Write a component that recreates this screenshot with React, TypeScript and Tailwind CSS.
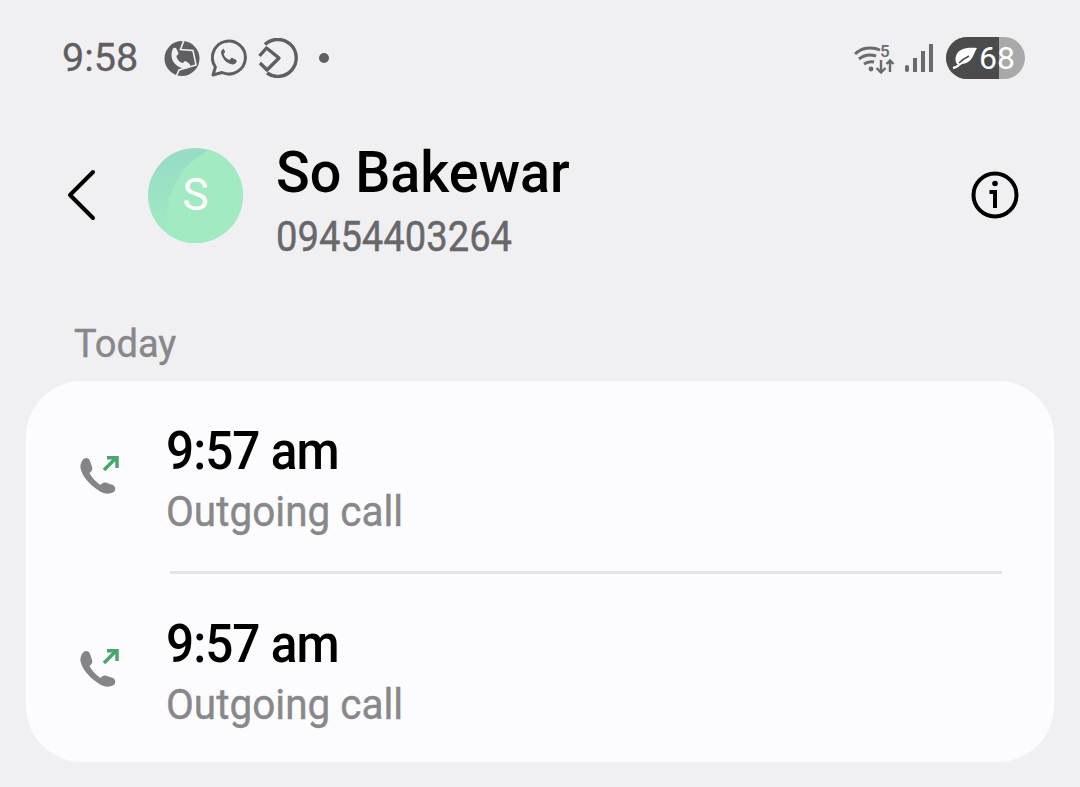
const font = { fontFamily: 'Roboto, sans-serif' };

function PhoneBubbleIcon() {
  return (
    <svg width="36" height="37" viewBox="0 0 36 37">
      <circle cx="18" cy="18.500" r="17.500" fill="#5f5f61" />
      <path d="M20 0L16.500 9.500L29 10.500L32 25L15 30L12 37" fill="none" stroke="#f0f0f2" strokeWidth="1.600" />
      <path d="M9.500 8c2-1 3 0 4 3l1 2c0 2-2 2-2 3 0 3 3 6 6 7 1 0 2-2 3-2l3 2c2 1 2 3 1 4-2 2-5 2-8 1-6-2-10-7-10-13 0-3 1-6 2-7z" fill="#f0f0f2" />
    </svg>
  );
}

function WhatsappIcon() {
  return (
    <svg width="36" height="38" viewBox="0 0 36 38" fill="none">
      <path d="M2 36l2.400-8A16.500 16.500 0 1 1 11 33.500z" stroke="#5f5f61" strokeWidth="3" strokeLinejoin="round" />
      <path d="M12.500 10c-3 1-3 4-1 8 2 4 5 6 8 7 3 1 5 0 6-2 .5-1.500 0-2-1-2.500l-3-1.500c-1-.5-1.500 0-2 1-.5.8-1 1-2 .5-2-1-3.500-2.500-4.500-4.500-.5-1 0-1.500.5-2 1-1 .5-1.500 0-2.500l-1-2c-.5-.8-.8-.7 0-.5z" fill="#5f5f61" />
    </svg>
  );
}

function ArrowCircleIcon() {
  return (
    <svg width="40" height="40" viewBox="0 0 40 40" fill="none" stroke="#5f5f61" strokeWidth="3.400">
      <path d="M7 6.500A18.500 18.500 0 1 1 9 35" />
      <path d="M1.500 18L8.500 10L21 20L9 32L2 25" strokeLinejoin="round" />
    </svg>
  );
}

function WifiIcon() {
  return (
    <svg width="42" height="32" viewBox="0 0 42 32" fill="none">
      <path d="M1 12C7 6 17 4 26 8" stroke="#6a6a6c" strokeWidth="3" />
      <path d="M5 17c5-4 11-5 17-3" stroke="#6a6a6c" strokeWidth="3" />
      <path d="M10 22c3-2 6-3 10-2" stroke="#6a6a6c" strokeWidth="3" />
      <circle cx="17" cy="27" r="2.400" fill="#6a6a6c" />
      <path d="M27 18v12M22.500 26l4.500 4.500 4.500-4.500M36 30V18M32.500 22l3.500-3.500 3.500 3.500" stroke="#6a6a6c" strokeWidth="2.400" />
      <text x="26" y="15" fill="#6a6a6c" fontSize="17" fontWeight="500" fontFamily="Roboto, sans-serif">5</text>
    </svg>
  );
}

function SignalIcon() {
  return (
    <svg width="30" height="30" viewBox="0 0 30 30" fill="#6a6a6c">
      <rect x="1" y="22" width="4" height="7" rx="2" />
      <rect x="9" y="15" width="4" height="14" />
      <rect x="17" y="8" width="4" height="21" />
      <rect x="25" y="1" width="4" height="28" />
    </svg>
  );
}

function Battery() {
  return (
    <div className="relative flex h-[42px] w-[79px] items-center overflow-hidden rounded-full bg-[#a9a9a9] text-[32px] leading-none text-white" style={font}>
      <div className="absolute inset-y-0 left-0 w-[53px] bg-[#4b4b4b]" />
      <svg className="relative ml-[6px]" width="26" height="26" viewBox="0 0 26 26" fill="none">
        <path d="M25 3C14 2 6 4 4 11c-1 3-.5 6 1 8 6 1 12-1 15-6 2-3 3-7 5-10z" fill="#fff" />
        <path d="M1 23c5-1 6-3 8-5" stroke="#fff" strokeWidth="2.400" />
        <path d="M7 18c3-3 6-5 10-7" stroke="#4b4b4b" strokeWidth="1.400" />
      </svg>
      <span className="relative ml-[1px]">68</span>
    </div>
  );
}

function OutgoingCallIcon() {
  return (
    <svg width="42" height="40" viewBox="0 0 42 40" fill="none">
      <path d="M3 5C5 1 10 1 11 5L13 11C14 14 12 16 10.500 17C13 22 17 26 21.500 29C23 27 25 26 28 27L34 29C37 31 37 35 34 36.500C30 38.500 24 38 19 34C10 28 3 20 1.500 12C1 9 2 7 3 5Z" fill="#858587" />
      <path d="M25 14L37 2M28 1.800H38V12" stroke="#4aa66c" strokeWidth="3.500" />
    </svg>
  );
}

function CallRow() {
  return (
    <div className="flex h-[190px] items-center pl-[53px]">
      <div className="w-[87px]">
        <OutgoingCallIcon />
      </div>
      <div className="flex flex-col">
        <span className="origin-center scale-y-[1.1] text-[49.500px] font-medium leading-[58px] tracking-[-1px] text-black">9:57 am</span>
        <span className="mt-[2px] origin-center translate-y-[5px] scale-y-[1.07] text-[40.500px] leading-[50px] text-[#88888a] [-webkit-text-stroke:0.4px_#88888a]">Outgoing call</span>
      </div>
    </div>
  );
}

export default function App() {
  return (
    <div className="h-[787px] w-[1080px] overflow-hidden bg-[#f0f0f2]" style={font}>
      {/* status bar */}
      <div className="mt-[39px] flex h-[38px] items-center justify-between pl-[62px] pr-[55px]">
        <div className="flex items-center">
          <span className="text-[39.500px] leading-none text-[#5f5f61] [-webkit-text-stroke:0.3px_#5f5f61]">9:58</span>
          <div className="ml-[26px] flex items-center gap-[11px]">
            <PhoneBubbleIcon />
            <WhatsappIcon />
            <ArrowCircleIcon />
          </div>
          <div className="ml-[21px] h-[10px] w-[10px] rounded-full bg-[#5f5f61]" />
        </div>
        <div className="flex items-center gap-[8px]">
          <WifiIcon />
          <SignalIcon />
          <div className="ml-[4px]"><Battery /></div>
        </div>
      </div>

      {/* header */}
      <div className="mt-[62px] flex items-center pl-[67px] pr-[61px]">
        <svg width="30" height="52" viewBox="0 0 30 52" fill="none" stroke="#000" strokeWidth="4" strokeLinecap="round" strokeLinejoin="round">
          <path d="M26 3L3 26l23 23" />
        </svg>
        <div className="relative ml-[51px] flex h-[95px] w-[95px] items-center justify-center overflow-hidden rounded-full bg-gradient-to-b from-[#96dcc6] to-[#a2eac1] text-[44px] text-white">
          <div className="absolute left-[19px] top-[-6px] h-[152px] w-[152px] rounded-full bg-[#a2eac1]" />
          <span className="relative">S</span>
        </div>
        <div className="ml-[33px] flex flex-1 flex-col">
          <span className="origin-left scale-y-[1.04] text-[55.700px] font-medium leading-[66px] text-black">So Bakewar</span>
          <span className="translate-y-[9px] scale-y-[1.1] text-[38.200px] leading-[46px] text-[#68686a] [-webkit-text-stroke:0.4px_#68686a]">09454403264</span>
        </div>
        <svg width="48" height="48" viewBox="0 0 48 48" fill="none" stroke="#000" strokeWidth="4">
          <circle cx="24" cy="24" r="21.500" />
          <circle cx="24" cy="12.500" r="2.800" fill="#000" stroke="none" />
          <path d="M18.500 21H24V37" />
        </svg>
      </div>

      {/* today */}
      <div className="mt-[70px] pl-[74px] text-[38px] leading-[46px] text-[#88888a] [-webkit-text-stroke:0.4px_#88888a]">Today</div>

      {/* card */}
      <div className="mx-[26px] mt-[14px] h-[381px] rounded-[56px] bg-[#fcfcff]">
        <CallRow />
        <div className="ml-[144px] mr-[52px] h-[3px] bg-[#e4e4e6]" />
        <CallRow />
      </div>
    </div>
  );
}
